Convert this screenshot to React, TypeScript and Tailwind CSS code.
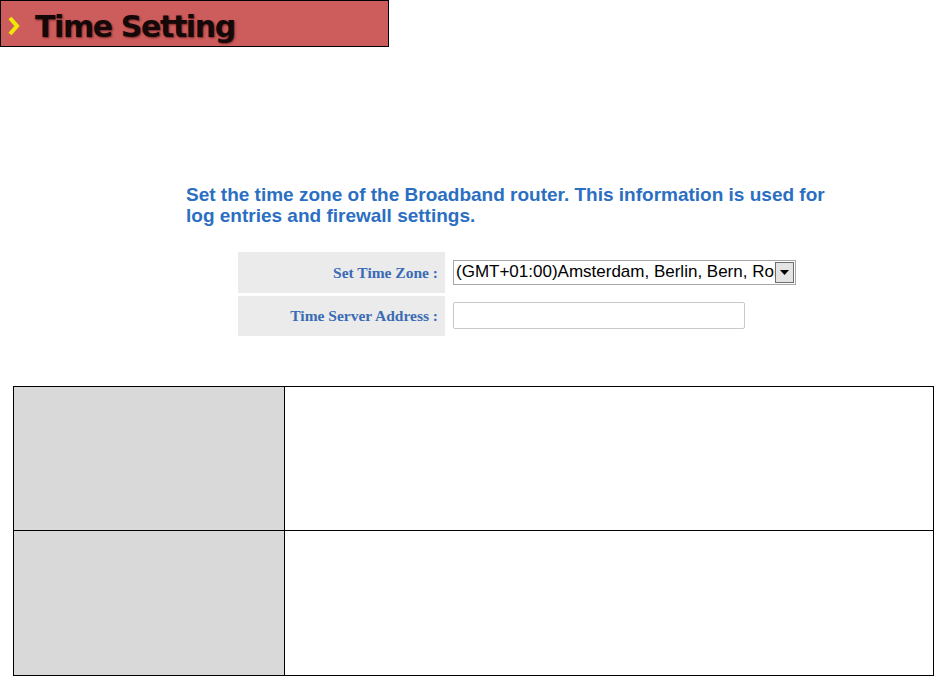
import React from 'react';

const sans = { fontFamily: '"Liberation Sans", Arial, sans-serif' };
const serif = { fontFamily: '"Liberation Serif", "Times New Roman", serif' };

const FormRow: React.FC<{ label: string; children: React.ReactNode; tall?: boolean }> = ({ label, children, tall }) => (
  <div className="flex gap-[8px]">
    <div
      className={`w-[207px] ${tall ? 'h-[41px]' : 'h-[40px]'} bg-[#ebebeb] flex items-center justify-end pr-[7px] text-[15.5px] font-bold text-[#3a6bb5]`}
      style={serif}
    >
      {label}
    </div>
    <div className="flex items-center">{children}</div>
  </div>
);

const App: React.FC = () => {
  return (
    <div className="w-[936px] h-[676px] overflow-hidden bg-white">
      {/* titlebar */}
      <div className="w-[389px] h-[47px] border border-black bg-[#cd5c5c] flex items-center">
        <svg width="14" height="22" viewBox="0 0 14 22" className="ml-[6px] mt-[5px]">
          <polyline points="3,3 10,11 3,19" fill="none" stroke="#f0e800" strokeWidth="4" />
        </svg>
        <span
          className="ml-[14px] mt-[5px] text-[30px] font-bold text-[#140808] tracking-[-1.4px]"
          style={{ fontFamily: '"DejaVu Sans", Verdana, sans-serif', textShadow: '1px 1px 2px rgba(60,0,0,0.6)' }}
        >
          Time Setting
        </span>
      </div>

      <p className="mt-[137px] ml-[186px] text-[19px] leading-[21px] font-bold text-[#2b6fc2]" style={sans}>
        Set the time zone of the Broadband router. This information is used for
        <br />
        log entries and firewall settings.
      </p>

      {/* formulier */}
      <div className="mt-[26px] ml-[238px] flex flex-col gap-[3px]">
        <FormRow label="Set Time Zone :" tall>
          <div className="w-[343px] h-[25px] border border-[#a7a7a7] flex items-center bg-white mt-[-1px]">
            <span className="flex-1 overflow-hidden whitespace-nowrap text-[17px] text-black pl-[2px]" style={sans}>
              (GMT+01:00)Amsterdam, Berlin, Bern, Rome, Stockholm, Vienna
            </span>
            <div className="w-[19px] h-[21px] mr-[1px] border border-[#6d6d6d] bg-[#e4e4e4] flex items-center justify-center">
              <svg width="9" height="5" viewBox="0 0 9 5">
                <polygon points="0,0 9,0 4.5,5" fill="#000" />
              </svg>
            </div>
          </div>
        </FormRow>
        <FormRow label="Time Server Address :">
          <input
            type="text"
            className="w-[292px] h-[27px] border border-[#c9c9c9] rounded-[2px] bg-white outline-none mt-[-2px]"
          />
        </FormRow>
      </div>

      {/* beschrijvingstabel */}
      <div className="mt-[50px] ml-[13px] w-[921px] border-l border-t border-black">
        {[144, 145].map((h) => (
          <div key={h} className="flex border-b border-black" style={{ height: h }}>
            <div className="w-[271px] bg-[#d9d9d9] border-r border-black" />
            <div className="flex-1 border-r border-black" />
          </div>
        ))}
      </div>
    </div>
  );
};

export default App;
